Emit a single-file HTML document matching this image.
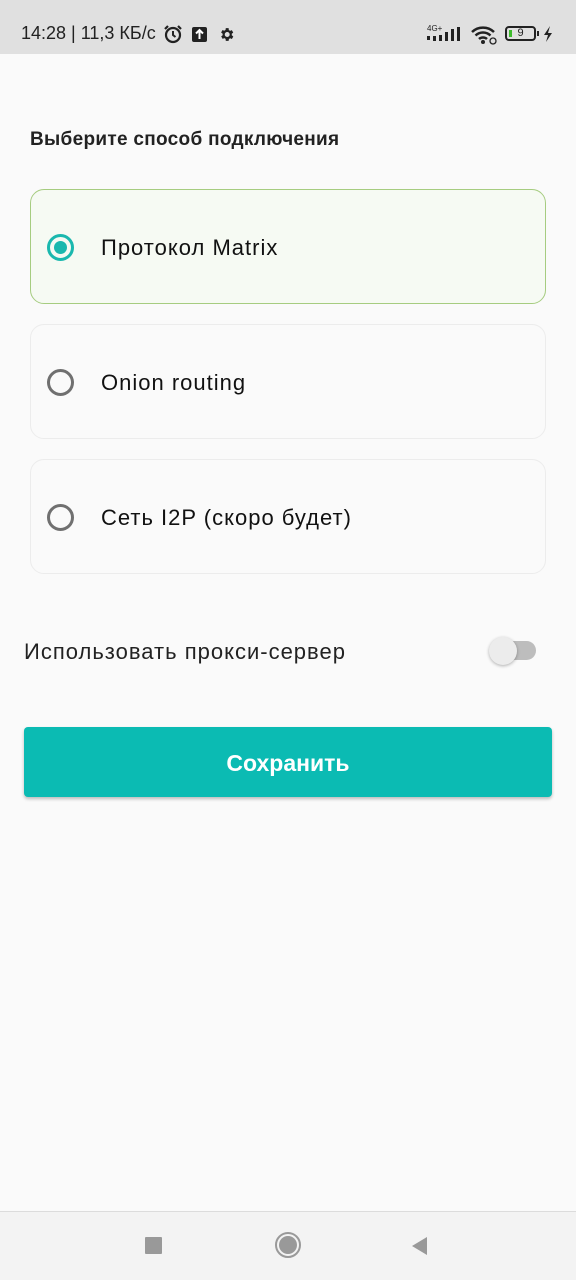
<!DOCTYPE html>
<html><head><meta charset="utf-8">
<style>
*{margin:0;padding:0;box-sizing:border-box}
body{width:576px;height:1280px;background:#fafafa;font-family:"Liberation Sans","Noto Sans CJK SC",sans-serif;position:relative;overflow:hidden;color:#1a1a1a}
.sb{position:absolute;left:0;top:0;width:576px;height:54px;background:#e0e0e0}
.sbt{position:absolute;left:21px;top:23px;font-size:18px;color:#222}
.title{position:absolute;left:30px;top:129px;font-size:19px;letter-spacing:0.3px;font-weight:bold;color:#222}
.card{position:absolute;left:30px;width:516px;height:115px;border:1.5px solid #ececec;border-radius:14px;background:#fafafa}
.card.sel{border:1.5px solid #a6cc80;background:#f6faf3}
.radio{position:absolute;left:16px;top:44px;width:27px;height:27px;border:3px solid #707070;border-radius:50%}
.sel .radio{border-color:#1ab8ae}
.sel .radio::after{content:"";position:absolute;left:4px;top:4px;width:13px;height:13px;border-radius:50%;background:#1ab8ae}
.lbl{position:absolute;left:70px;top:45px;font-size:22px;letter-spacing:1px;color:#111}
.proxy{position:absolute;left:24px;top:639px;font-size:22px;letter-spacing:1px;color:#222}
.track{position:absolute;left:492px;top:641px;width:44px;height:19px;border-radius:10px;background:#bdbdbd}
.thumb{position:absolute;left:489px;top:637px;width:28px;height:28px;border-radius:50%;background:#ececec;box-shadow:0 1px 3px rgba(0,0,0,.3)}
.btn{position:absolute;left:24px;top:727px;width:528px;height:70px;background:#0bbbb3;border-radius:4px;box-shadow:0 2px 3px rgba(0,0,0,.25);color:#fff;font-size:23px;font-weight:bold;text-align:center;line-height:72px}
.nav{position:absolute;left:0;top:1211px;width:576px;height:69px;background:#f3f3f3;border-top:1px solid #dcdcdc}
</style></head><body>
<div class="sb">
<div class="sbt">14:28 | 11,3 КБ/с</div>
<svg style="position:absolute;left:163px;top:24px" width="20" height="20" viewBox="0 0 20 20"><circle cx="10" cy="11" r="7" fill="none" stroke="#222" stroke-width="2.2"/><path d="M10 7v4l2.5 2" stroke="#222" stroke-width="2" fill="none"/><path d="M2 5l3-3M18 5l-3-3" stroke="#222" stroke-width="2.2"/></svg>
<svg style="position:absolute;left:192px;top:27px" width="15" height="15"><rect width="15" height="15" rx="2" fill="#222"/><path d="M7.5 3v9M4 6.5l3.5-3.5 3.5 3.5" stroke="#fff" stroke-width="2" fill="none"/></svg>
<svg style="position:absolute;left:218px;top:26px" width="17" height="17" viewBox="0 0 24 24"><path fill="#222" d="M19.4 13a7.5 7.5 0 000-2l2.1-1.6-2-3.5-2.5 1a7 7 0 00-1.7-1L15 3h-4l-.4 2.7a7 7 0 00-1.7 1l-2.5-1-2 3.5L6.6 11a7.5 7.5 0 000 2l-2.1 1.6 2 3.5 2.5-1a7 7 0 001.7 1L11 21h4l.4-2.7a7 7 0 001.7-1l2.5 1 2-3.5zM13 15.5a3.5 3.5 0 110-7 3.5 3.5 0 010 7z"/></svg>
<div style="position:absolute;left:427px;top:24px;font-size:8px;color:#222">4G+</div>
<svg style="position:absolute;left:427px;top:27px" width="36" height="16"><rect x="0" y="9" width="3" height="4" fill="#222"/><rect x="6" y="9" width="3" height="5" fill="#222"/><rect x="12" y="8" width="3" height="6" fill="#222"/><rect x="18" y="5" width="3" height="9" fill="#222"/><rect x="24" y="2" width="3" height="12" fill="#222"/><rect x="30" y="0" width="3" height="14" fill="#222"/></svg>
<svg style="position:absolute;left:470px;top:25px" width="28" height="20" viewBox="0 0 28 20"><path d="M2 7a16 16 0 0 1 22 0M5.5 10.5a11 11 0 0 1 15 0M9 14a6 6 0 0 1 8 0" stroke="#222" stroke-width="2.5" fill="none"/><circle cx="13" cy="17" r="2" fill="#222"/><circle cx="23" cy="16" r="3" fill="none" stroke="#222" stroke-width="1.3"/></svg>
<div style="position:absolute;left:505px;top:26px;width:31px;height:15px;border:2px solid #222;border-radius:4px;font-size:11px;line-height:11px;text-align:center;color:#222">9<span style="position:absolute;left:2px;top:2px;width:3px;height:7px;background:#3dbb2c"></span></div>
<div style="position:absolute;left:537px;top:31px;width:2px;height:5px;background:#222"></div>
<svg style="position:absolute;left:543px;top:26px" width="10" height="16"><path d="M7 0L1 9h4l-2 7 6-9H5z" fill="#222"/></svg>
</div>

<div class="title">Выберите способ подключения</div>
<div class="card sel" style="top:189px"><div class="radio"></div><div class="lbl">Протокол Matrix</div></div>
<div class="card" style="top:324px"><div class="radio"></div><div class="lbl">Onion routing</div></div>
<div class="card" style="top:459px"><div class="radio"></div><div class="lbl">Сеть I2P (скоро будет)</div></div>

<div class="proxy">Использовать прокси-сервер</div>
<div class="track"></div><div class="thumb"></div>
<div class="btn">Сохранить</div>

<div class="nav">
<div style="position:absolute;left:145px;top:25px;width:17px;height:17px;background:#999;border-radius:1px"></div>
<div style="position:absolute;left:275px;top:20px;width:26px;height:26px;border:2px solid #999;border-radius:50%"><div style="position:absolute;left:2px;top:2px;width:18px;height:18px;border-radius:50%;background:#999"></div></div>
<svg style="position:absolute;left:411px;top:24px" width="18" height="20"><path d="M16 1L1 10l15 9z" fill="#999"/></svg>
</div>
</body></html>
